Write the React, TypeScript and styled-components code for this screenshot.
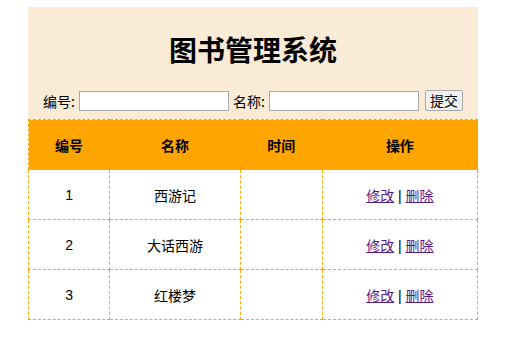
import React from "react";
import styled, { createGlobalStyle } from "styled-components";

const Global = createGlobalStyle`
  html, body { margin: 0; padding: 0; background: #fff; }
  body { font-family: "Liberation Sans", "Noto Sans CJK SC", sans-serif; color: #000; }
`;

const Wrap = styled.div`
  width: 450px;
  margin: 7px 0 0 28px;
`;

const Head = styled.div`
  background: #faebd7;
  height: 112px;
  display: flex;
  flex-direction: column;
  align-items: center;
  box-sizing: border-box;
  padding-top: 26px;
`;

const Title = styled.h1`
  margin: 0;
  font-size: 28px;
  line-height: 32px;
  font-weight: bold;
  font-family: "Noto Sans CJK SC", sans-serif;
`;

const Form = styled.form`
  margin-top: 25px;
  display: flex;
  align-items: center;
  gap: 4px;
  font-size: 14px;
  font-family: "Noto Sans CJK SC", sans-serif;
`;

const Label = styled.span``;

const Field = styled.input`
  width: 150px;
  height: 20px;
  box-sizing: border-box;
  border: 1px solid #a9a9a9;
  background: #fff;
  padding: 0 2px;
`;

const Btn = styled.button`
  margin-left: 2px;
  height: 21px;
  padding: 0 4px;
  font-size: 14px;
  font-family: "Noto Sans CJK SC", sans-serif;
  background: #f0f0f0;
  border: 1px solid #a9a9a9;
  border-radius: 2px;
  line-height: 17px;
`;

const Table = styled.table`
  width: 450px;
  border-collapse: collapse;
  font-size: 14px;
  font-family: "Liberation Sans", "Noto Sans CJK SC", sans-serif;
`;

const Th = styled.th<{ $w: number }>`
  width: ${(p) => p.$w}px;
  height: 49px;
  background: #ffa500;
  border: 1px dashed #ffa500;
  font-weight: bold;
  padding: 0;
`;

const Td = styled.td`
  height: 49px;
  border: 1px dashed #ffa500;
  text-align: center;
  padding: 0;
`;

const Link = styled.a`
  color: #551a8b;
  text-decoration: underline;
`;

const rows = [
  { id: 1, name: "西游记" },
  { id: 2, name: "大话西游" },
  { id: 3, name: "红楼梦" },
];

export default function App() {
  return (
    <>
      <Global />
      <Wrap>
        <Head>
          <Title>图书管理系统</Title>
          <Form onSubmit={(e) => e.preventDefault()}>
            <Label>编号:</Label>
            <Field />
            <Label>名称:</Label>
            <Field />
            <Btn type="submit">提交</Btn>
          </Form>
        </Head>
        <Table>
          <thead>
            <tr>
              <Th $w={81}>编号</Th>
              <Th $w={131}>名称</Th>
              <Th $w={82}>时间</Th>
              <Th $w={156}>操作</Th>
            </tr>
          </thead>
          <tbody>
            {rows.map((r) => (
              <tr key={r.id}>
                <Td>{r.id}</Td>
                <Td>{r.name}</Td>
                <Td></Td>
                <Td>
                  <Link href="#">修改</Link> | <Link href="#">删除</Link>
                </Td>
              </tr>
            ))}
          </tbody>
        </Table>
      </Wrap>
    </>
  );
}
